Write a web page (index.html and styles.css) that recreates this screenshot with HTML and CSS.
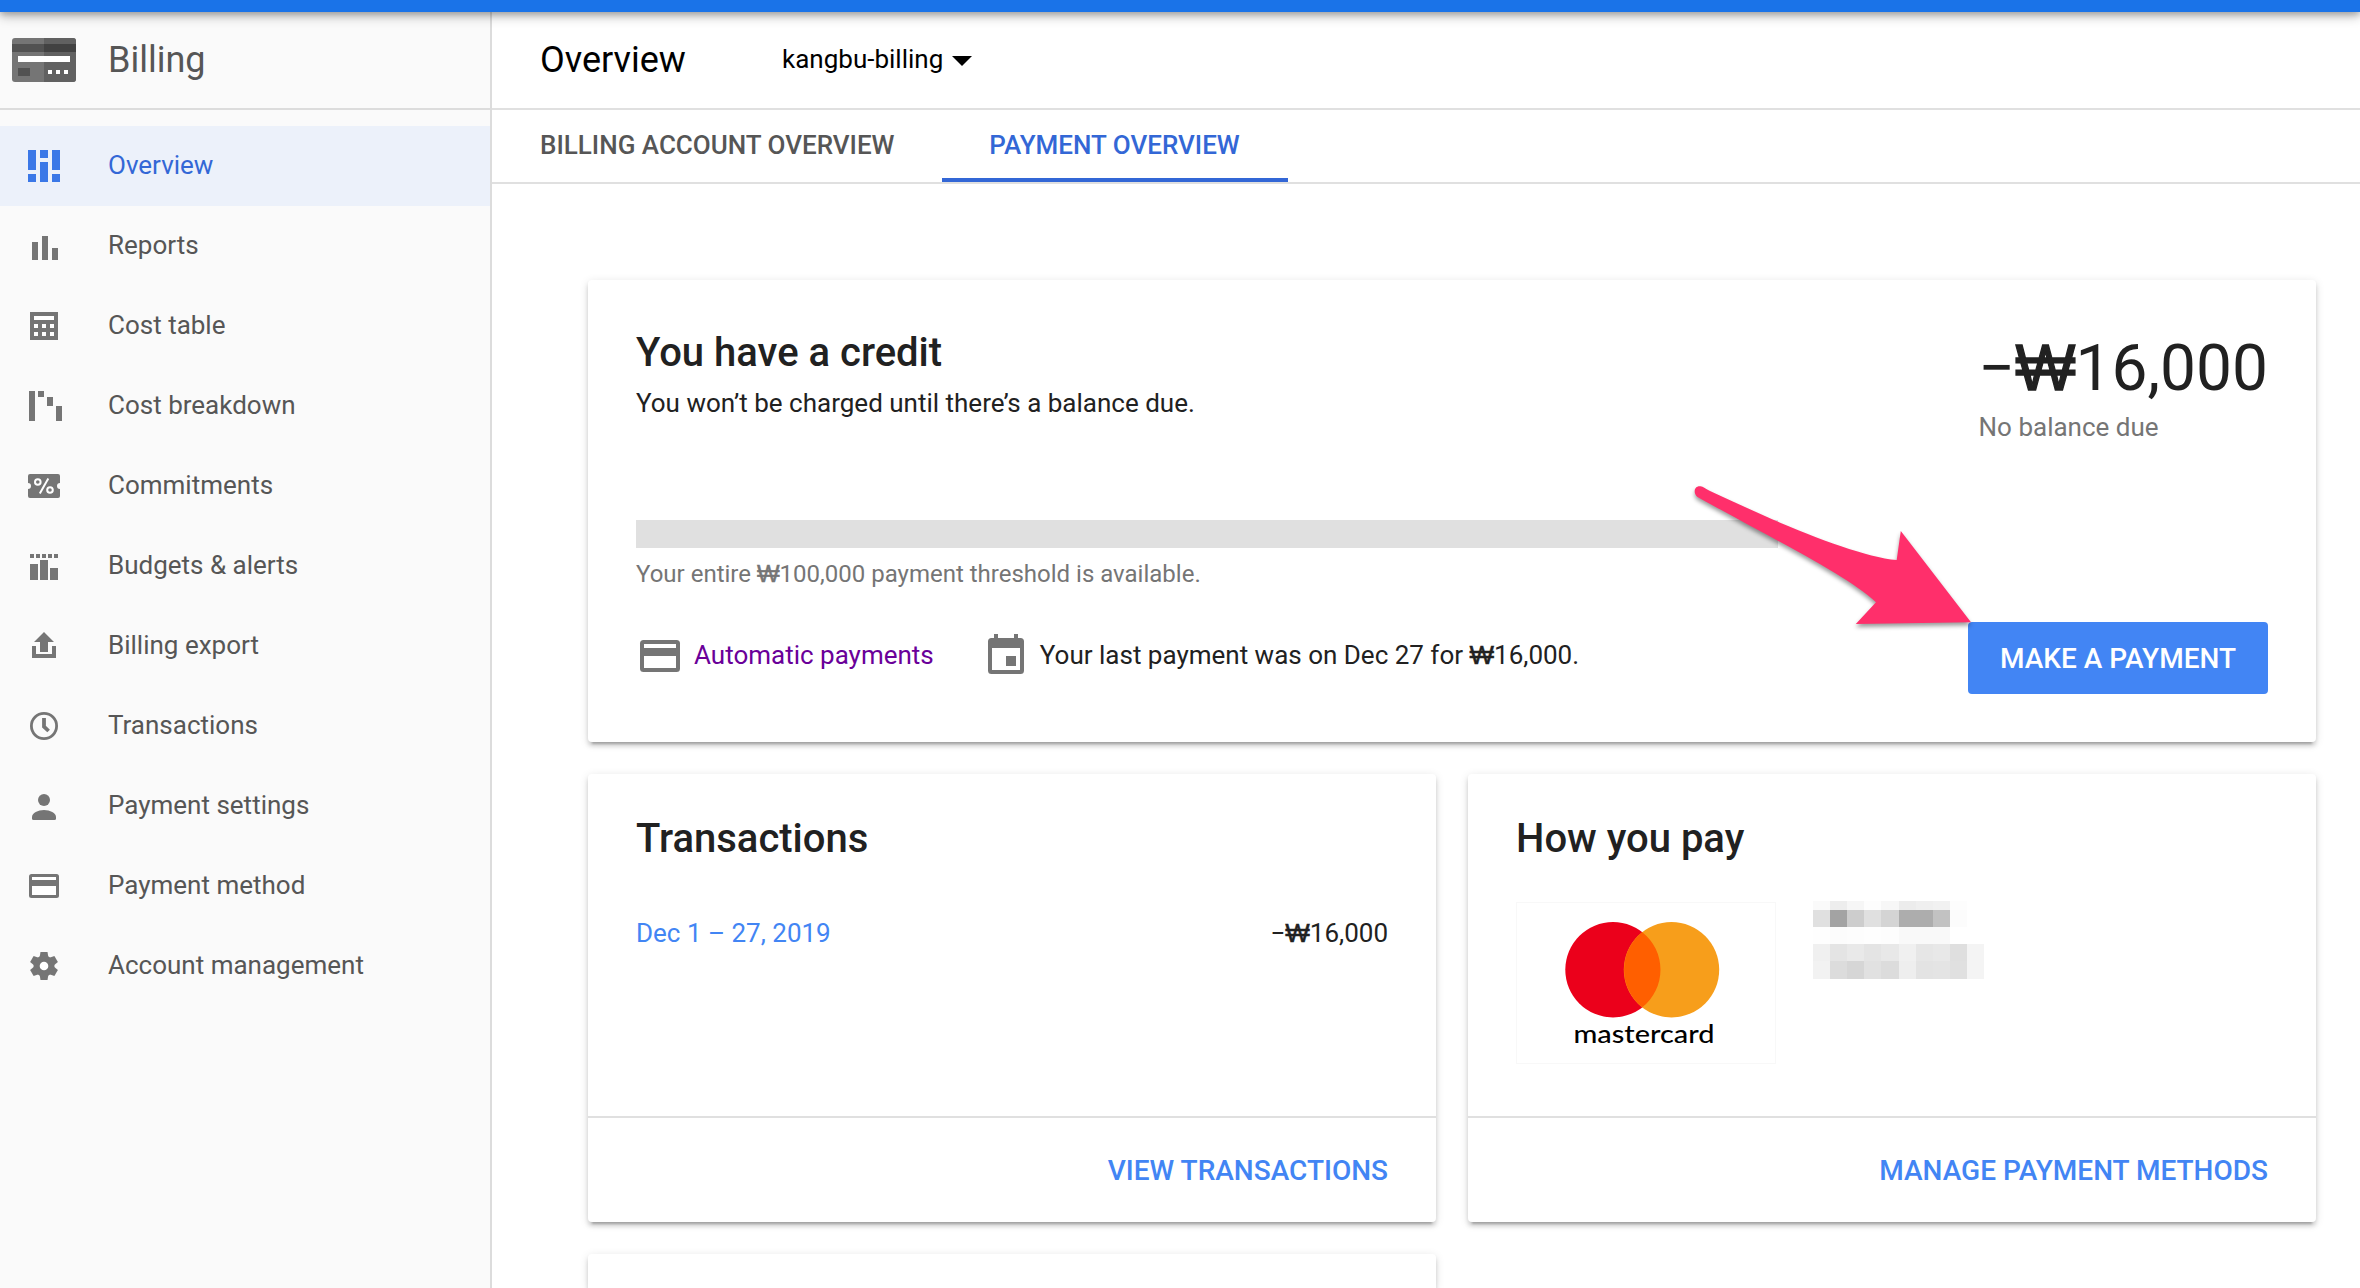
FILE: index.html
```html
<!DOCTYPE html>
<html lang="en">
<head>
<meta charset="utf-8">
<title>Billing – Overview</title>
<link rel="stylesheet" href="styles.css">
</head>
<body>
<div class="topbar"></div>
<div class="shell">
  <aside class="sidebar">
    <header class="product">
      <svg class="product-icon" width="64" height="44" viewBox="0 0 64 44">
        <rect width="64" height="44" rx="3" fill="#757575"/>
        <path d="M32 0h29a3 3 0 0 1 3 3v38a3 3 0 0 1-3 3H32z" fill="#616161"/>
        <path d="M0 6h32v8H0z" fill="#525252"/><path d="M32 6h32v8H32z" fill="#424242"/>
        <path d="M6 18h52v6H6zM36 32h4v4h-4zM44 32h4v4h-4zM52 32h4v4h-4z" fill="#fff"/>
        <path d="M6 30h12v8H6z" fill="#525252"/>
      </svg>
      <span class="product-name">Billing</span>
    </header>
    <nav class="nav">
      <a class="nav-item active"><svg class="icon" viewBox="0 0 36 36"><path d="M2 2h8v20H2zM2 26h8v8H2zM14 2h8v8h-8zM14 14h8v20h-8zM26 2h8v20h-8zM26 26h8v8h-8z"/></svg><span>Overview</span></a>
      <a class="nav-item"><svg class="icon" viewBox="0 0 36 36"><path d="M6 14h6v18H6zM16 8h6v24h-6zM26 20h6v12h-6z"/></svg><span>Reports</span></a>
      <a class="nav-item"><svg class="icon" viewBox="0 0 36 36"><path d="M4 4h28v28H4z"/><path class="cut" d="M8 8h20v4H8zM8 16h4v4H8zM16 16h4v4h-4zM24 16h4v4h-4zM8 24h4v4H8zM16 24h4v4h-4zM24 24h4v4h-4z"/></svg><span>Cost table</span></a>
      <a class="nav-item"><svg class="icon" viewBox="0 0 36 36"><path d="M3 3h6v30H3zM12 3h6v6h-6zM21 9h6v9h-6zM30 18h6v15h-6z"/></svg><span>Cost breakdown</span></a>
      <a class="nav-item"><svg class="icon" viewBox="0 0 36 36"><path d="M4 6h28a2 2 0 0 1 2 2v7a3 3 0 0 0 0 6v7a2 2 0 0 1-2 2H4a2 2 0 0 1-2-2v-7a3 3 0 0 0 0-6V8a2 2 0 0 1 2-2z"/><g class="cut-line"><circle cx="11.8" cy="14" r="2.8"/><circle cx="24" cy="22" r="2.8"/><path d="M13.8 25.5l8.5-15"/></g></svg><span>Commitments</span></a>
      <a class="nav-item"><svg class="icon" viewBox="0 0 36 36"><path d="M4 6h4v4H4zM10 6h4v4h-4zM16 6h4v4h-4zM22 6h4v4h-4zM28 6h4v4h-4zM4 16h8v16H4zM14 12h8v20h-8zM24 20h8v12h-8z"/></svg><span>Budgets &amp; alerts</span></a>
      <a class="nav-item"><svg class="icon" viewBox="0 0 36 36"><path d="M18 4l10 10h-6v10h-8V14H8zM6 18h4v8h16v-8h4v12H6z"/></svg><span>Billing export</span></a>
      <a class="nav-item"><svg class="icon" viewBox="0 0 36 36"><g class="line"><circle cx="18" cy="18" r="12.6" stroke-width="2.8"/><path d="M18 10v8.6l4.6 4.4" stroke-width="3.8"/></g></svg><span>Transactions</span></a>
      <a class="nav-item"><svg class="icon" viewBox="0 0 36 36"><circle cx="18" cy="12" r="6"/><path d="M6 29c0-4 6-7 12-7s12 3 12 7v1.500a1.500 1.500 0 0 1-1.500 1.500h-21A1.500 1.500 0 0 1 6 30.500z"/></svg><span>Payment settings</span></a>
      <a class="nav-item"><svg class="icon" viewBox="0 0 36 36"><rect x="3" y="6" width="30" height="24" rx="2.500"/><path class="cut" d="M6 9h24v3H6zM6 18h24v9H6z"/></svg><span>Payment method</span></a>
      <a class="nav-item"><svg class="icon" viewBox="0 0 36 36"><circle cx="18" cy="18" r="10.500"/><path id="tooth" d="M14.500 4h7l1 6v16l-1 6h-7l-1-6V10z"/><use href="#tooth" transform="rotate(60 18 18)"/><use href="#tooth" transform="rotate(120 18 18)"/><circle class="cut" cx="18" cy="18" r="4.300"/></svg><span>Account management</span></a>
    </nav>
  </aside>

  <main class="main">
    <header class="page-head">
      <h1 class="page-title">Overview</h1>
      <div class="account"><span>kangbu-billing</span><svg width="20" height="10" viewBox="0 0 20 10"><path d="M0 0h20L10 10z"/></svg></div>
    </header>
    <div class="tabs">
      <a class="tab">BILLING ACCOUNT OVERVIEW</a>
      <a class="tab selected">PAYMENT OVERVIEW</a>
    </div>

    <div class="cards">
      <section class="card credit">
        <div class="credit-info">
          <h2 class="card-title">You have a credit</h2>
          <p class="credit-sub">You won’t be charged until there’s a balance due.</p>
          <div class="threshold"></div>
          <p class="threshold-note">Your entire <span class="won">₩</span>100,000 payment threshold is available.</p>
          <div class="facts">
            <svg class="fact-icon" width="48" height="48" viewBox="0 0 48 48"><rect x="4" y="8" width="40" height="32" rx="3.500"/><path class="hole" d="M8 12h32v4H8zM8 24h32v12H8z"/></svg>
            <a class="auto-link">Automatic payments</a>
            <svg class="fact-icon calendar" width="48" height="48" viewBox="0 0 48 48"><path d="M12 2h4v4h16V2h4v4h2.500A3.500 3.500 0 0 1 42 9.500v29a3.500 3.500 0 0 1-3.500 3.500h-29A3.500 3.500 0 0 1 6 38.500v-29A3.500 3.500 0 0 1 9.500 6H12z"/><path class="hole" d="M10 16h28v22H10z"/><path d="M24 24h10v10H24z"/></svg>
            <p class="last-payment">Your last payment was on Dec 27 for <span class="won">₩</span>16,000.</p>
          </div>
        </div>
        <div class="credit-side">
          <div class="balance">
            <div class="amount">−<span class="won">₩</span>16,000</div>
            <div class="balance-note">No balance due</div>
          </div>
          <button class="pay-button">MAKE A PAYMENT</button>
        </div>
        <svg class="arrow" width="300" height="160" viewBox="0 0 300 160"><path d="M17.500 17C12.500 12.500 14.500 5.500 20.500 6.300C23 6.600 26 9 30 11C98 43 175 76 216.700 80L220.800 51L291 142.300L175.800 144L196 122.300C168 96 108 67 17.500 17z"/></svg>
      </section>

      <section class="card half">
        <div class="half-body">
          <h2 class="card-title">Transactions</h2>
          <div class="row"><a class="period">Dec 1 – 27, 2019</a><div>−<span class="won">₩</span>16,000</div></div>
        </div>
        <footer class="half-foot">VIEW TRANSACTIONS</footer>
      </section>

      <section class="card half">
        <div class="half-body">
          <h2 class="card-title">How you pay</h2>
          <div class="method">
            <svg class="brand" width="260" height="162" viewBox="0 0 260 162">
              <rect x=".5" y=".5" width="259" height="161" fill="#fff" stroke="#f8f8f8"/>
              <circle cx="97" cy="67.700" r="47.700" fill="#eb001b"/>
              <circle cx="155.500" cy="67.700" r="47.700" fill="#f79e1b"/>
              <path d="M126.250 30.200a47.700 47.700 0 0 1 0 75a47.700 47.700 0 0 1 0-75z" fill="#ff5f00"/>
              <text class="brand-name" x="57.500" y="141" textLength="141" lengthAdjust="spacingAndGlyphs">mastercard</text>
            </svg>
            <svg class="redacted" width="171" height="78" viewBox="0 0 171 78" shape-rendering="crispEdges"></svg>
          </div>
        </div>
        <footer class="half-foot">MANAGE PAYMENT METHODS</footer>
      </section>

      <section class="card next"></section>
    </div>
  </main>
</div>
<script src="redacted.js"></script>
</body>
</html>
```
FILE: redacted.js
```js
// Mosaic cells that mask the card holder's details, one grey level per cell.
const rows = [
  { y: 0, h: 9, cells: "fa ed f6 fd f7 ec ef f1 fd ff" },
  { y: 9, h: 17, cells: "e0 a3 cd e0 d4 ad ad c2 fc ff" },
  { y: 26, h: 17, cells: "fe fc fd fe fd f9 f9 f9 ff ff" },
  { y: 43, h: 17, cells: "f0 e4 e9 e4 e8 f0 e6 e8 df f4" },
  { y: 60, h: 18, cells: "f2 dc d6 e1 dc ee e3 e4 e0 f4" }
];
const mosaic = document.querySelector(".redacted");
for (const row of rows) {
  row.cells.split(" ").forEach((level, i) => {
    const cell = document.createElementNS("http://www.w3.org/2000/svg", "rect");
    cell.setAttribute("x", i * 17.1);
    cell.setAttribute("y", row.y);
    cell.setAttribute("width", 17.1);
    cell.setAttribute("height", row.h);
    cell.setAttribute("fill", "#" + level.repeat(3));
    mosaic.appendChild(cell);
  });
}
```
FILE: styles.css
```css
* { box-sizing: border-box; }
body {
  margin: 0;
  height: 1288px;
  overflow: hidden;
  display: flex;
  flex-direction: column;
  background: #fff;
  color: #212121;
  font-family: Roboto, sans-serif;
  font-size: 26px;
  line-height: 32px;
}
h1, h2, p { margin: 0; }
span, a, h1, h2, p { white-space: nowrap; }
.won { font-family: "Open Sans", sans-serif; line-height: 1; -webkit-text-stroke: .02em currentColor; }

.topbar {
  flex: none;
  height: 12px;
  background: #1a73e8;
  position: relative;
  z-index: 2;
  box-shadow: 0 4px 12px rgba(0, 0, 0, .28), 0 2px 6px rgba(0, 0, 0, .22);
}
.shell { flex: 1; display: flex; min-height: 0; }

.sidebar {
  flex: none;
  width: 492px;
  background: #fafafa;
  border-right: 2px solid #dcdcdc;
}
.product {
  height: 98px;
  display: flex;
  align-items: center;
  gap: 32px;
  padding-left: 12px;
  border-bottom: 2px solid #dcdcdc;
}
.product-name { font-size: 36px; color: #565656; }
.nav { padding-top: 16px; }
.nav-item {
  height: 80px;
  display: flex;
  align-items: center;
  gap: 46px;
  padding-left: 26px;
  color: #565656;
}
.nav-item span { padding-bottom: 2px; }
.nav-item.active { background: #ecf1fa; color: #3367d6; }
.icon { width: 36px; height: 36px; fill: #757575; flex: none; }
.active .icon { fill: #3b78e7; }
.icon .cut { fill: #fff; }
.cut-line { fill: none; stroke: #fff; stroke-width: 2; }
.line { fill: none; stroke: #757575; }

.main { flex: 1; display: flex; flex-direction: column; min-width: 0; }
.page-head {
  flex: none;
  height: 98px;
  display: flex;
  align-items: center;
  padding-left: 48px;
  border-bottom: 2px solid #e0e0e0;
  color: #000;
}
.page-title { font-size: 36px; font-weight: 400; width: 242px; }
.account { display: flex; align-items: center; gap: 9px; padding-bottom: 2px; }
.account svg { margin-top: 4px; }
.tabs {
  flex: none;
  height: 74px;
  display: flex;
  border-bottom: 2px solid #e0e0e0;
}
.tab {
  padding: 19px 47px 0 48px;
  font-weight: 500;
  color: #565656;
}
.tab.selected {
  width: 346px;
  padding: 19px 0 0;
  text-align: center;
  color: #3367d6;
  border-bottom: 4px solid #3367d6;
}

.cards {
  flex: 1;
  min-height: 0;
  padding: 96px 44px 0 96px;
  display: grid;
  grid-template-columns: 848px 848px;
  grid-template-rows: 462px 448px minmax(0, 1fr);
  gap: 32px;
}
.card {
  background: #fff;
  border-radius: 4px;
  box-shadow: 0 4px 4px rgba(0, 0, 0, .14), 0 2px 10px rgba(0, 0, 0, .12), 0 6px 2px -4px rgba(0, 0, 0, .2);
}
.card.next { border-radius: 4px 4px 0 0; }
.card-title { font-size: 40px; line-height: 48px; font-weight: 500; }

.credit {
  grid-column: 1 / 3;
  position: relative;
  display: flex;
  justify-content: space-between;
  padding: 49px 48px 48px;
}
.credit-info { width: 1142px; }
.credit-sub { margin-top: 10px; }
.threshold { height: 28px; margin-top: 101px; background: #e0e0e0; }
.threshold-note { font-size: 24px; height: 32px; margin-top: 10px; color: #757575; }
.facts {
  display: flex;
  align-items: center;
  height: 48px;
  margin-top: 42px;
}
.fact-icon { fill: #757575; margin-right: 10px; }
.fact-icon.calendar { margin-left: 48px; }
.fact-icon .hole { fill: #fff; }
.auto-link { color: #6a0099; padding-bottom: 2px; }
.last-payment { height: 34px; }
.credit-side {
  display: flex;
  flex-direction: column;
  justify-content: space-between;
  align-items: flex-end;
}
.amount { font-size: 64px; line-height: 76px; height: 76px; margin-top: 2px; }
.balance-note { margin-top: 4px; color: #757575; }
.pay-button {
  width: 300px;
  height: 72px;
  border: 0;
  border-radius: 4px;
  padding: 1px 0 0;
  background: #4285f4;
  color: #fff;
  font: 500 28px/32px Roboto, sans-serif;
}
/* Annotation arrow laid over the card, pointing at the pay button. */
.arrow {
  position: absolute;
  left: 1092px;
  top: 200px;
  fill: #ff2f6b;
  filter: drop-shadow(0 3px 2px rgba(0, 0, 0, .4));
}

.half { display: flex; flex-direction: column; }
.half-body { flex: 1; padding: 41px 48px 0; }
.row { display: flex; justify-content: space-between; height: 32px; margin-top: 54px; }
.period { color: #4285f4; }
.half-foot {
  height: 106px;
  padding: 37px 48px 0;
  border-top: 2px solid #e0e0e0;
  text-align: right;
  font-size: 28px;
  font-weight: 500;
  color: #4285f4;
}
.method { display: flex; margin-top: 39px; }
.redacted { margin: -1px 0 0 37px; }
.brand-name { font: 500 25px Lato, sans-serif; fill: #000; }
```
